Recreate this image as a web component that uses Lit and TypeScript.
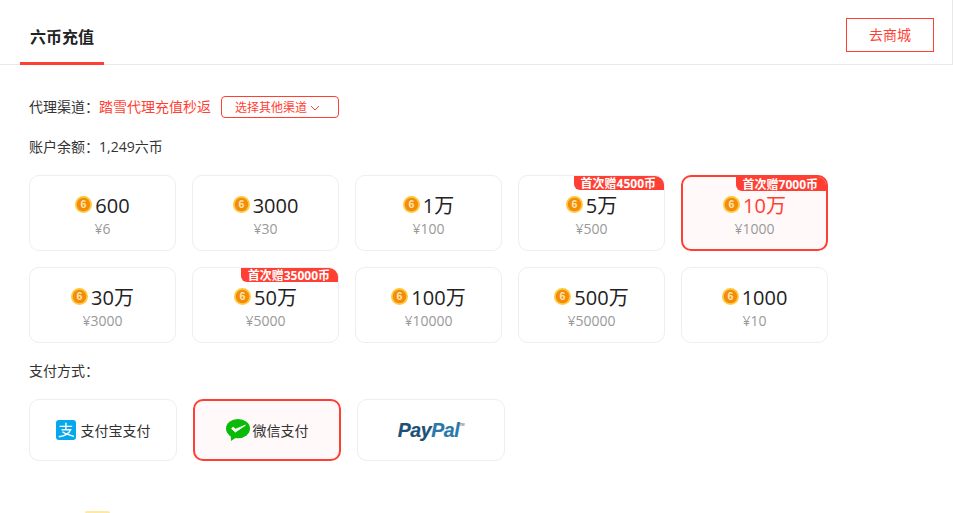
import { LitElement, css, html, svg } from 'lit';
import { customElement } from 'lit/decorators.js';

interface Pack {
  amount: string;
  price: string;
  bonus?: string;
  selected?: boolean;
}

const PACKS: Pack[] = [
  { amount: '600', price: '¥6' },
  { amount: '3000', price: '¥30' },
  { amount: '1万', price: '¥100' },
  { amount: '5万', price: '¥500', bonus: '首次赠4500币' },
  { amount: '10万', price: '¥1000', bonus: '首次赠7000币', selected: true },
  { amount: '30万', price: '¥3000' },
  { amount: '50万', price: '¥5000', bonus: '首次赠35000币' },
  { amount: '100万', price: '¥10000' },
  { amount: '500万', price: '¥50000' },
  { amount: '1000', price: '¥10' }
];

const coin = svg`<svg class="coin" viewBox="0 0 16 16" width="17" height="17">
  <circle cx="8" cy="8" r="8" fill="#fdc83a"></circle>
  <circle cx="8" cy="8" r="6.3" fill="#f38b0b"></circle>
  <text x="8" y="11.6" text-anchor="middle" font-size="10" font-weight="700" font-family="'Liberation Sans', sans-serif" fill="#ffe6ae">6</text>
</svg>`;

const alipay = svg`<svg class="alipay" viewBox="0 0 20 20" width="20" height="20">
  <rect width="20" height="20" rx="3" fill="#06a7ec"></rect>
  <path d="M3.6 6.4H16.2M9.9 2.8V9.6M5.6 9.8H14.6C13 13.8 8.6 16 2.8 16.8M6.4 11.8C9 14 13 15 18 16.4" fill="none" stroke="#fff" stroke-width="1.4"></path>
</svg>`;

const wechat = svg`<svg viewBox="0 0 24 22" width="24" height="22">
  <ellipse cx="12" cy="9.6" rx="12" ry="9.6" fill="#09bb07"></ellipse>
  <path d="M4.6 16L5 22L10 18.4Z" fill="#09bb07"></path>
  <path d="M5.6 9.6L9.4 13L19.4 6.2L9.6 10.2L7.2 8.2Z" fill="#fff" stroke="#fff" stroke-width="0.9" stroke-linejoin="round"></path>
</svg>`;

const chevron = svg`<svg class="chevron" viewBox="0 0 10 6" width="10" height="6">
  <path d="M1 1L5 5L9 1" fill="none" stroke="currentColor" stroke-width="1"></path>
</svg>`;

@customElement('app-root')
export class AppRoot extends LitElement {
  static styles = css`
    :host {
      display: block;
      height: 513px;
      overflow: hidden;
      background: #ffffff;
      color: #333333;
      font-family: 'Open Sans', 'Noto Sans CJK SC', sans-serif;
      font-size: 14px;
    }

    .header {
      display: flex;
      justify-content: space-between;
      align-items: flex-start;
      height: 64px;
      padding: 0 18px 0 20px;
      border-bottom: 1px solid #e8e8e8;
      border-right: 1px solid #e8e8e8;
    }

    .tab {
      width: 84px;
      height: 65px;
      box-sizing: border-box;
      border-bottom: 3px solid #ff3f34;
      text-align: center;
      font-size: 16px;
      font-weight: 700;
      line-height: 74px;
      color: #222222;
    }

    .shop {
      width: 88px;
      height: 34px;
      box-sizing: border-box;
      margin-top: 18px;
      border: 1px solid #ff3f34;
      color: #ff3f34;
      text-align: center;
      line-height: 32px;
    }

    .content {
      padding: 31px 0 0 29px;
    }

    .line {
      display: flex;
      align-items: center;
      height: 22px;
      line-height: 22px;
    }

    .label {
      width: 70px;
    }

    .red {
      color: #ff3f34;
    }

    .other {
      display: flex;
      align-items: center;
      gap: 3px;
      width: 118px;
      height: 22px;
      box-sizing: border-box;
      margin-left: 10px;
      padding: 1px 0 0 13px;
      border: 1px solid #ff3f34;
      border-radius: 4px;
      color: #ff3f34;
      font-size: 12px;
    }

    .balance {
      margin-top: 18px;
    }

    .packs {
      display: grid;
      grid-template-columns: repeat(5, 147px);
      grid-auto-rows: 76px;
      gap: 16px;
      margin-top: 17px;
    }

    .pack {
      position: relative;
      display: flex;
      flex-direction: column;
      align-items: center;
      box-sizing: border-box;
      padding-top: 16px;
      border: 1px solid #eeeeee;
      border-radius: 10px;
      overflow: hidden;
    }

    .pack.selected {
      padding-top: 15px;
      border: 2px solid #ff3f34;
      background: #fff9f9;
    }

    .amount {
      display: flex;
      align-items: center;
      gap: 3px;
      height: 28px;
      font-size: 20px;
      line-height: 28px;
      color: #222222;
    }

    .coin {
      margin-top: -3px;
    }

    .selected .amount {
      color: #ff3f34;
    }

    .price {
      font-size: 14px;
      line-height: 18px;
      color: #999999;
    }

    .bonus {
      position: absolute;
      top: 0;
      right: 0;
      padding: 0 8px 0 7px;
      height: 14px;
      border-bottom-left-radius: 6px;
      background: #ff3f34;
      color: #ffffff;
      font-size: 12px;
      font-weight: 700;
      line-height: 15px;
    }

    .pay-label {
      margin-top: 17px;
    }

    .pays {
      display: grid;
      grid-template-columns: repeat(3, 148px);
      gap: 16px;
      margin-top: 17px;
    }

    .pay {
      display: flex;
      align-items: center;
      justify-content: center;
      gap: 3px;
      height: 62px;
      box-sizing: border-box;
      border: 1px solid #eeeeee;
      border-radius: 10px;
    }

    .pay.selected {
      border: 2px solid #ff3f34;
      background: #fff9f9;
    }

    .alipay {
      margin-right: 2px;
    }

    .paypal {
      font-family: 'Liberation Sans', sans-serif;
      font-size: 19.5px;
      font-weight: 700;
      font-style: italic;
      letter-spacing: -0.4px;
      -webkit-text-stroke: 0.2px currentColor;
      color: #1c5078;
    }

    .paypal span {
      color: #2a78ab;
    }

    .paypal sup {
      font-size: 4px;
      font-style: normal;
      color: #8a8a8a;
      vertical-align: 11px;
      line-height: 0;
      -webkit-text-stroke: 0;
    }

    .peek {
      width: 25px;
      height: 10px;
      margin: 50px 0 0 56px;
      border-radius: 2px 2px 0 0;
      background: #ffe9a0;
    }
  `;

  private renderPack(pack: Pack) {
    return html`<div class="pack ${pack.selected ? 'selected' : ''}">
      ${pack.bonus ? html`<div class="bonus">${pack.bonus}</div>` : null}
      <div class="amount">${coin}<span>${pack.amount}</span></div>
      <div class="price">${pack.price}</div>
    </div>`;
  }

  override render() {
    return html`
      <div class="header">
        <div class="tab">六币充值</div>
        <div class="shop">去商城</div>
      </div>
      <div class="content">
        <div class="line">
          <span class="label">代理渠道：</span>
          <span class="red">踏雪代理充值秒返</span>
          <div class="other">选择其他渠道 ${chevron}</div>
        </div>
        <div class="line balance">
          <span class="label">账户余额：</span>
          <span>1,249六币</span>
        </div>
        <div class="packs">${PACKS.map((p) => this.renderPack(p))}</div>
        <div class="line pay-label">支付方式：</div>
        <div class="pays">
          <div class="pay">${alipay}<span>支付宝支付</span></div>
          <div class="pay selected">${wechat}<span>微信支付</span></div>
          <div class="pay"><div class="paypal">Pay<span>Pal</span><sup>TM</sup></div></div>
        </div>
        <div class="peek"></div>
      </div>
    `;
  }
}
